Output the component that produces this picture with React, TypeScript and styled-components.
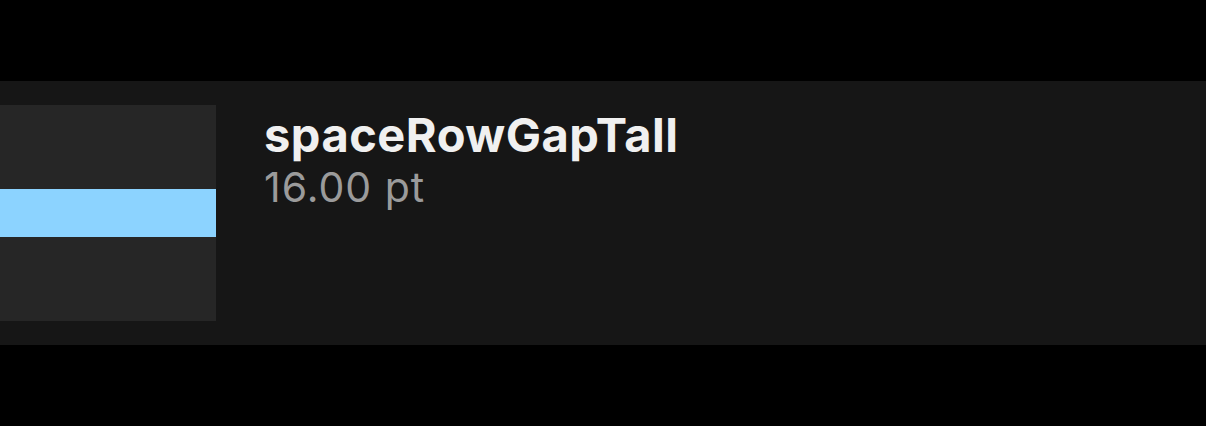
import styled, { createGlobalStyle } from "styled-components";

const Global = createGlobalStyle`
  html, body { margin: 0; padding: 0; background: #000; }
  body { font-family: Inter, "Noto Sans", sans-serif; }
`;

const Page = styled.div`
  width: 1206px;
  height: 426px;
  padding-top: 81px;
  box-sizing: border-box;
`;

const Row = styled.div`
  display: flex;
  align-items: flex-start;
  gap: 48px;
  height: 264px;
  box-sizing: border-box;
  padding: 24px 0;
  background: #161616;
`;

const Swatch = styled.div`
  width: 216px;
  height: 216px;
  flex-shrink: 0;
  display: flex;
  align-items: center;
  background: #262626;
`;

const Bar = styled.div<{ $size: number }>`
  width: 100%;
  height: ${(p) => p.$size}px;
  background: #8cd3ff;
`;

const Info = styled.div`
  display: flex;
  flex-direction: column;
  padding-top: 3px;
`;

const Name = styled.div`
  font-size: 47px;
  font-weight: 700;
  line-height: 54px;
  letter-spacing: 0.5px;
  color: #f0f0f0;
`;

const Value = styled.div`
  font-size: 41px;
  font-weight: 400;
  line-height: 50px;
  letter-spacing: 1px;
  color: #9b9b9b;
`;

export default function App() {
  return (
    <>
      <Global />
      <Page>
        <Row>
          <Swatch>
            <Bar $size={48} />
          </Swatch>
          <Info>
            <Name>spaceRowGapTall</Name>
            <Value>16.00 pt</Value>
          </Info>
        </Row>
      </Page>
    </>
  );
}
